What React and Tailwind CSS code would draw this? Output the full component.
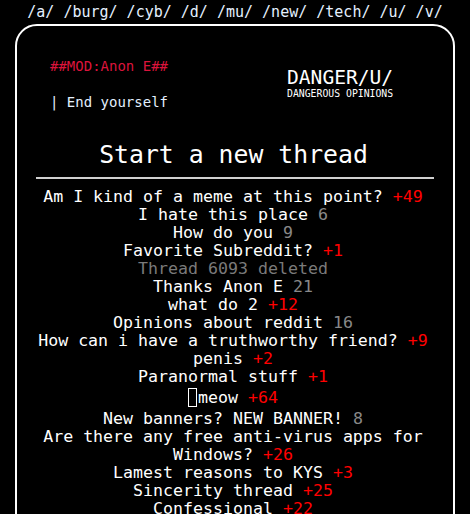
import React from 'react';

const threads = [
  { title: 'Am I kind of a meme at this point?', score: '+49', hot: true },
  { title: 'I hate this place', score: '6' },
  { title: 'How do you', score: '9' },
  { title: 'Favorite Subreddit?', score: '+1', hot: true },
  { title: 'Thread 6093 deleted', deleted: true },
  { title: 'Thanks Anon E', score: '21' },
  { title: 'what do 2', score: '+12', hot: true },
  { title: 'Opinions about reddit', score: '16' },
  { title: 'How can i have a truthworthy friend?', score: '+9', hot: true },
  { title: 'penis', score: '+2', hot: true },
  { title: 'Paranormal stuff', score: '+1', hot: true },
  { title: 'meow', score: '+64', hot: true, box: true },
  { title: 'New banners? NEW BANNER!', score: '8' },
  { title: 'Are there any free anti-virus apps for Windows?', score: '+26', hot: true },
  { title: 'Lamest reasons to KYS', score: '+3', hot: true },
  { title: 'Sincerity thread', score: '+25', hot: true },
  { title: 'Confessional', score: '+22', hot: true },
  { title: 'Rate my setup', score: '+4', hot: true },
];

const boards = ['a', 'burg', 'cyb', 'd', 'mu', 'new', 'tech', 'u', 'v'];

export default function App() {
  return (
    <div className="w-[470px] h-[514px] overflow-hidden bg-black text-white font-['DejaVu_Sans_Mono',monospace]">
      {/* board nav */}
      <div className="text-center text-[15px] leading-[22px] text-[#e4f0ff] whitespace-pre pt-[1px]">
        {boards.map((b) => `/${b}/`).join(' ')}
      </div>

      <div className="mx-[15px] mt-[1px] border-2 border-white rounded-[22px] pt-[32px] h-[600px]">
        {/* header */}
        <div className="flex">
          <div className="w-[270px] pl-[33px]">
            <div className="text-[14px] leading-[16px] text-[#dc143c]">##MOD:Anon E##</div>
            <div className="text-[14px] leading-[16px] text-[#e4f0ff] mt-[20px]">| End yourself</div>
          </div>
          <div className="pt-[9px]">
            <div className="text-[19.6px] leading-[22px]">DANGER/U/</div>
            <div className="text-[9.8px] leading-[12px] mt-[-1px]">DANGEROUS OPINIONS</div>
          </div>
        </div>

        {/* title */}
        <div className="text-center text-[24.8px] leading-[30px] mt-[30px] pr-[3px]">Start a new thread</div>
        <div className="mx-[19px] mt-[7px] h-[2px] bg-[#d0d0d0]" />

        {/* thread list */}
        <div className="mt-[9px] pl-[8px] pr-[12px] text-center text-[16.6px] leading-[18px]">
          {threads.map((t, i) => (
            <div key={i} className={t.box ? 'leading-[22px] my-[1px]' : ''}>
              {t.deleted ? (
                <span className="text-[#7a7a7a]">{t.title}</span>
              ) : (
                <>
                  {t.box && (
                    <span className="inline-block w-[9px] h-[19px] border border-white align-[-4px] mr-[1px]" />
                  )}
                  <span>{t.title}</span>{' '}
                  <span className={t.hot ? 'text-[#ff0000]' : 'text-[#888888]'}>{t.score}</span>
                </>
              )}
            </div>
          ))}
        </div>
      </div>
    </div>
  );
}
